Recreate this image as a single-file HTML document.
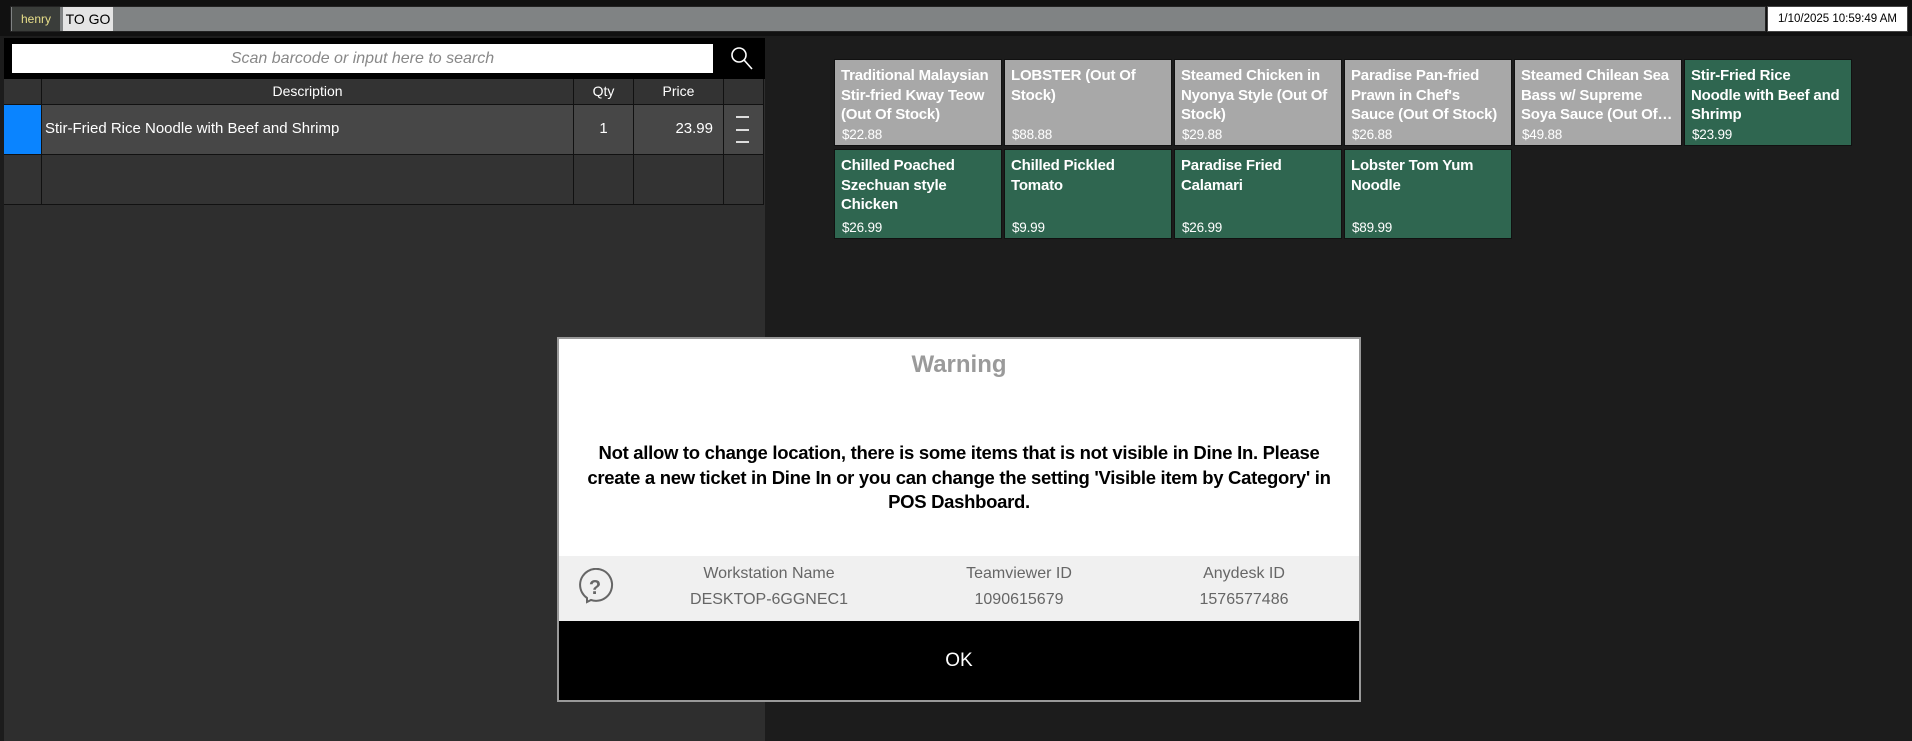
<!DOCTYPE html>
<html><head><meta charset="utf-8"><style>
*{margin:0;padding:0;box-sizing:border-box}
body{width:1912px;height:741px;background:#1c1c1c;position:relative;overflow:hidden;font-family:"Liberation Sans",sans-serif;}
.a{position:absolute}
.tile{position:absolute;width:168px;height:87px;color:#fff;font-weight:bold;font-size:15px;line-height:19.5px;padding:6px 6px 0;overflow:hidden;border:1px solid #111;letter-spacing:-0.2px;white-space:nowrap}
.tile .t{overflow:hidden;max-height:59px}
.tile .p{position:absolute;left:7px;bottom:1px;font-weight:normal;font-size:13.5px}
.g{background:#a8a8a8}.gr{background:#2f6650}
.cell{position:absolute;border-right:1px solid #111;border-bottom:1px solid #111}
</style></head><body>
<div class="a" style="left:0;top:0;width:1912px;height:36px;background:#111"></div>
<div class="a" style="left:10px;top:6px;width:1756px;height:26px;background:#808384;border:1px solid #222"></div>
<div class="a" style="left:12px;top:7px;width:48px;height:24px;background:#3a3d3a;color:#e8df8a;font-size:12px;line-height:24px;text-align:center">henry</div>
<div class="a" style="left:63px;top:7px;width:50px;height:24px;background:#e4e4e4;color:#000;font-size:14px;line-height:24px;text-align:center">TO GO</div>
<div class="a" style="left:1767px;top:6px;width:141px;height:26px;background:#fff;border:1px solid #444;color:#000;font-size:11.5px;line-height:24px;text-align:center">1/10/2025 10:59:49 AM</div>

<div class="a" style="left:4px;top:38px;width:761px;height:703px;background:#2e2e2e"></div>
<div class="a" style="left:4px;top:38px;width:761px;height:41px;background:#000"></div>
<div class="a" style="left:12px;top:44px;width:701px;height:29px;background:#fff;color:#888;font-style:italic;font-size:16px;line-height:29px;text-align:center">Scan barcode or input here to search</div>
<svg class="a" style="left:728px;top:45px" width="28" height="28" viewBox="0 0 28 28"><circle cx="11" cy="10" r="7" fill="none" stroke="#fff" stroke-width="1.6"/><line x1="16" y1="15" x2="24" y2="24" stroke="#fff" stroke-width="1.6"/></svg>

<div class="cell" style="left:4px;top:79px;width:38px;height:26px;background:#333"></div>
<div class="cell" style="left:42px;top:79px;width:532px;height:26px;background:#333;color:#fff;font-size:14px;line-height:25px;text-align:center">Description</div>
<div class="cell" style="left:574px;top:79px;width:60px;height:26px;background:#333;color:#fff;font-size:14px;line-height:25px;text-align:center">Qty</div>
<div class="cell" style="left:634px;top:79px;width:90px;height:26px;background:#333;color:#fff;font-size:14px;line-height:25px;text-align:center">Price</div>
<div class="cell" style="left:724px;top:79px;width:40px;height:26px;background:#333"></div>

<div class="cell" style="left:4px;top:105px;width:38px;height:50px;background:#0a84ff"></div>
<div class="cell" style="left:42px;top:105px;width:532px;height:50px;background:#474747;color:#fff;font-size:15px;line-height:48px;padding-left:3px">Stir-Fried Rice Noodle with Beef and Shrimp</div>
<div class="cell" style="left:574px;top:105px;width:60px;height:50px;background:#474747;color:#fff;font-size:15px;line-height:48px;text-align:center">1</div>
<div class="cell" style="left:634px;top:105px;width:90px;height:50px;background:#474747;color:#fff;font-size:15px;line-height:48px;text-align:right;padding-right:10px">23.99</div>
<div class="cell" style="left:724px;top:105px;width:40px;height:50px;background:#474747"></div>
<div class="a" style="left:736px;top:116px;width:13px;height:2px;background:#ddd"></div>
<div class="a" style="left:736px;top:129px;width:13px;height:2px;background:#ddd"></div>
<div class="a" style="left:736px;top:141px;width:13px;height:2px;background:#ddd"></div>

<div class="cell" style="left:4px;top:155px;width:38px;height:50px;background:#333"></div>
<div class="cell" style="left:42px;top:155px;width:532px;height:50px;background:#333"></div>
<div class="cell" style="left:574px;top:155px;width:60px;height:50px;background:#333"></div>
<div class="cell" style="left:634px;top:155px;width:90px;height:50px;background:#333"></div>
<div class="cell" style="left:724px;top:155px;width:40px;height:50px;background:#333"></div>

<div class="tile g" style="left:834px;top:59px"><div class="t">Traditional Malaysian<br>Stir-fried Kway Teow<br>(Out Of Stock)</div><span class="p">$22.88</span></div>
<div class="tile g" style="left:1004px;top:59px"><div class="t">LOBSTER (Out Of<br>Stock)</div><span class="p">$88.88</span></div>
<div class="tile g" style="left:1174px;top:59px"><div class="t">Steamed Chicken in<br>Nyonya Style (Out Of<br>Stock)</div><span class="p">$29.88</span></div>
<div class="tile g" style="left:1344px;top:59px"><div class="t">Paradise Pan-fried<br>Prawn in Chef's<br>Sauce (Out Of Stock)</div><span class="p">$26.88</span></div>
<div class="tile g" style="left:1514px;top:59px"><div class="t">Steamed Chilean Sea<br>Bass w/ Supreme<br>Soya Sauce (Out Of…</div><span class="p">$49.88</span></div>
<div class="tile gr" style="left:1684px;top:59px"><div class="t">Stir-Fried Rice<br>Noodle with Beef and<br>Shrimp</div><span class="p">$23.99</span></div>
<div class="tile gr" style="left:834px;top:149px;height:90px"><div class="t">Chilled Poached<br>Szechuan style<br>Chicken</div><span class="p">$26.99</span></div>
<div class="tile gr" style="left:1004px;top:149px;height:90px"><div class="t">Chilled Pickled<br>Tomato</div><span class="p">$9.99</span></div>
<div class="tile gr" style="left:1174px;top:149px;height:90px"><div class="t">Paradise Fried<br>Calamari</div><span class="p">$26.99</span></div>
<div class="tile gr" style="left:1344px;top:149px;height:90px"><div class="t">Lobster Tom Yum<br>Noodle</div><span class="p">$89.99</span></div>

<div class="a" style="left:557px;top:337px;width:804px;height:365px;background:#fff;border:2px solid #999">
 <div class="a" style="left:0;top:12px;width:800px;text-align:center;color:#9a9a9a;font-weight:bold;font-size:24px">Warning</div>
 <div class="a" style="left:0;top:102px;width:800px;text-align:center;color:#000;font-weight:bold;font-size:18.5px;letter-spacing:-0.3px;line-height:24.5px;white-space:nowrap">Not allow to change location, there is some items that is not visible in Dine In. Please<br>create a new ticket in Dine In or you can change the setting 'Visible item by Category' in<br>POS Dashboard.</div>
 <div class="a" style="left:0;top:217px;width:800px;height:65px;background:#f0f0f0;color:#666;font-size:16px">
  <svg class="a" style="left:16px;top:12px" width="40" height="40" viewBox="0 0 40 40"><path d="M12 34 L12 30 A16 16 0 1 1 16 32 Z" fill="none" stroke="#666" stroke-width="2"/><text x="20" y="26" text-anchor="middle" font-size="20" font-weight="bold" fill="#666" font-family="Liberation Sans">?</text></svg>
  <div class="a" style="left:110px;top:9px;width:200px;text-align:center">Workstation Name</div>
  <div class="a" style="left:110px;top:35px;width:200px;text-align:center">DESKTOP-6GGNEC1</div>
  <div class="a" style="left:360px;top:9px;width:200px;text-align:center">Teamviewer ID</div>
  <div class="a" style="left:360px;top:35px;width:200px;text-align:center">1090615679</div>
  <div class="a" style="left:585px;top:9px;width:200px;text-align:center">Anydesk ID</div>
  <div class="a" style="left:585px;top:35px;width:200px;text-align:center">1576577486</div>
 </div>
 <div class="a" style="left:0;top:282px;width:800px;height:79px;background:#000;color:#fff;font-size:19px;line-height:79px;text-align:center">OK</div>
</div>
</body></html>
